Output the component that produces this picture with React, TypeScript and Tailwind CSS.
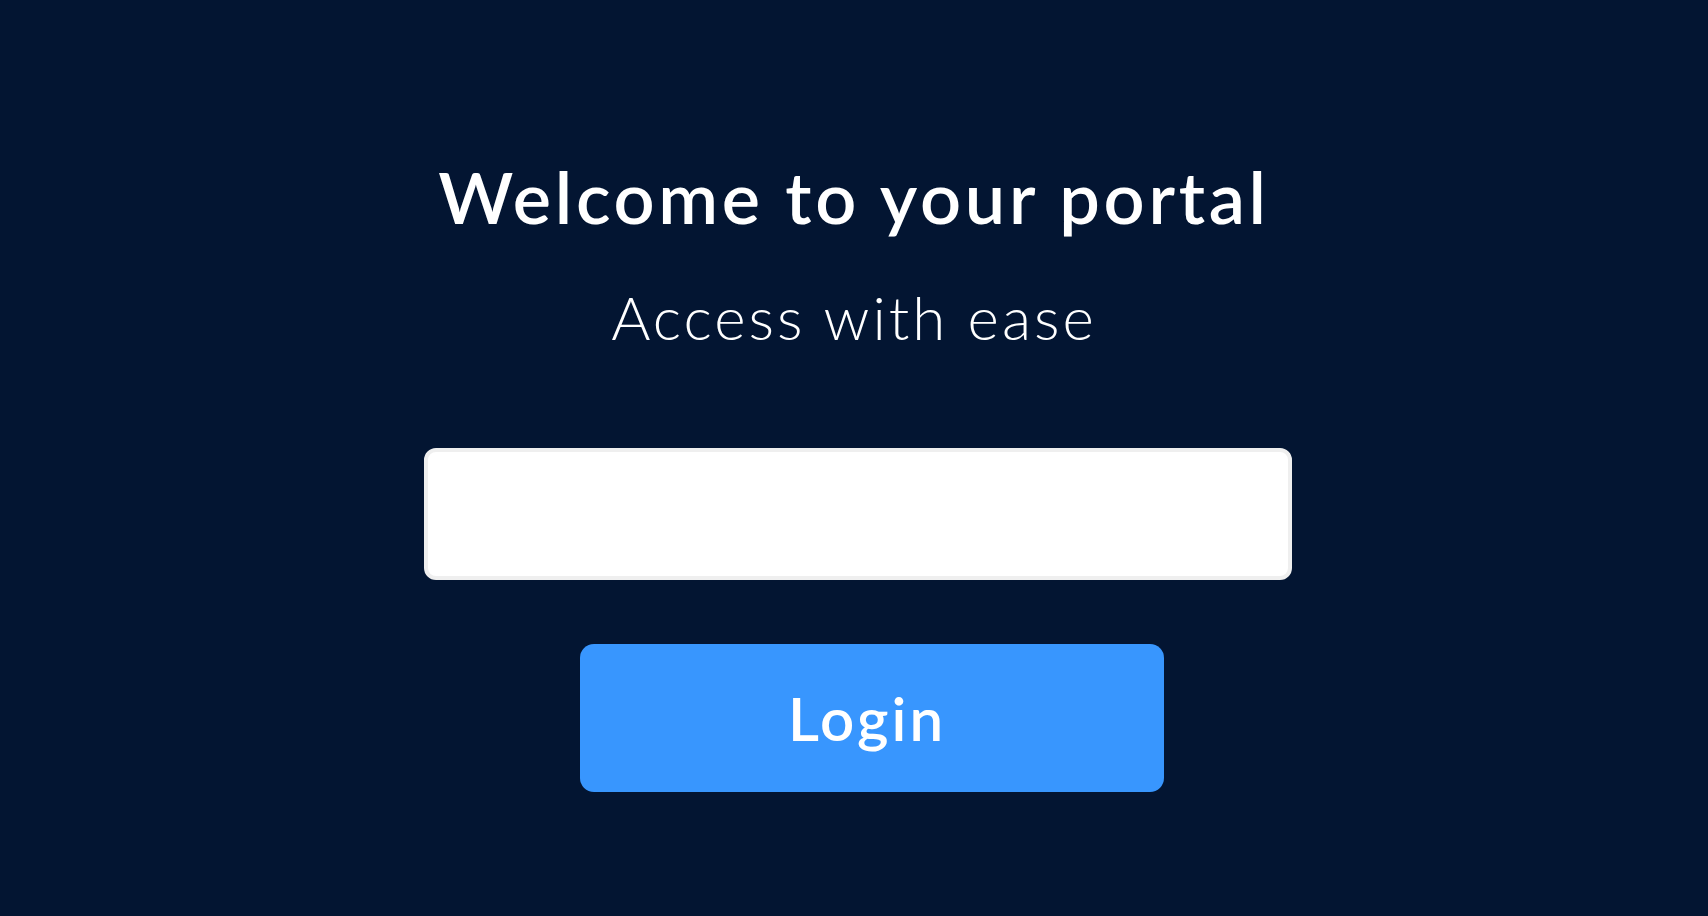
import React from 'react';

function App() {
  return (
    <div className="min-h-screen w-full bg-[#031532] font-['Lato','Noto_Sans',sans-serif] text-white">
      <div className="flex flex-col items-center pt-[160px]">
        <h1 className="text-[72px] font-semibold leading-none tracking-[3.7px]">
          Welcome to your portal
        </h1>
        <p className="mt-[55px] text-[60px] font-light leading-none tracking-[3px]">
          Access with ease
        </p>

        {/* login form */}
        <input
          type="text"
          className="ml-[8px] mt-[101px] h-[132px] w-[868px] rounded-[12px] border-4 border-[#efefef] bg-white px-6 text-[32px] text-gray-900 outline-none"
        />
        <button className="ml-[36px] mt-[64px] flex h-[148px] w-[584px] items-center justify-center rounded-[14px] bg-[#3896fe] pr-[10px] text-[60px] font-semibold leading-none tracking-[3px] text-white">
          Login
        </button>
      </div>
    </div>
  );
}

export default App;
